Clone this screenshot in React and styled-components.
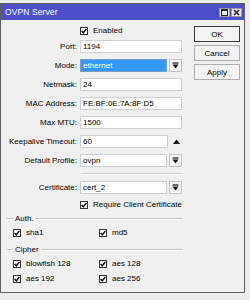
import React from "react";
import styled, { createGlobalStyle } from "styled-components";

const GlobalStyle = createGlobalStyle`
  html, body {
    margin: 0;
    padding: 0;
    background: #ececec;
    font-family: "Liberation Sans", Arial, sans-serif;
  }
`;

export default function App() {
  return (
    <>
      <GlobalStyle />
      <Window>
        <TitleBar>
          <Title>OVPN Server</Title>
          <TitleButtons>
            <TitleBtn>
              <svg width="7" height="7" viewBox="0 0 7 7">
                <rect x="0.5" y="0.5" width="6" height="6" fill="none" stroke="#222" />
                <line x1="0" y1="1.5" x2="7" y2="1.5" stroke="#222" />
              </svg>
            </TitleBtn>
            <TitleBtn>
              <svg width="7" height="7" viewBox="0 0 7 7">
                <path d="M1 1 L6 6 M6 1 L1 6" stroke="#222" strokeWidth="1.6" />
              </svg>
            </TitleBtn>
          </TitleButtons>
        </TitleBar>
        <Body>
          <Form>
            <Row $mt={4}>
              <Label />
              <Check checked label="Enabled" />
            </Row>
            <Row $mt={3}>
              <Label>Port:</Label>
              <Input $w={102}>1194</Input>
            </Row>
            <Row $mt={6}>
              <Label>Mode:</Label>
              <Input $w={87} $selected>ethernet</Input>
              <DropButton />
            </Row>
            <Row $mt={6}>
              <Label>Netmask:</Label>
              <Input $w={102}>24</Input>
            </Row>
            <Row $mt={6}>
              <Label>MAC Address:</Label>
              <Input $w={102}>FE:BF:0E:7A:8F:D5</Input>
            </Row>
            <Row $mt={6}>
              <Label>Max MTU:</Label>
              <Input $w={102}>1500</Input>
            </Row>
            <Row $mt={6}>
              <Label>Keepalive Timeout:</Label>
              <Input $w={88}>60</Input>
              <UpArrow>
                <svg width="7" height="5" viewBox="0 0 7 5">
                  <path d="M0 5 L3.5 0.5 L7 5 Z" fill="#111" />
                </svg>
              </UpArrow>
            </Row>
            <Row $mt={6}>
              <Label>Default Profile:</Label>
              <Input $w={87}>ovpn</Input>
              <DropButton />
            </Row>
            <Separator />
            <Row $mt={6}>
              <Label>Certificate:</Label>
              <Input $w={87}>cert_2</Input>
              <DropButton />
            </Row>
            <Row $mt={4}>
              <Label />
              <Check checked label="Require Client Certificate" />
            </Row>
            <GroupHeader $mt={2}>Auth.</GroupHeader>
            <CheckGrid $mt={2}>
              <Check checked label="sha1" />
              <Check checked label="md5" />
            </CheckGrid>
            <GroupHeader $mt={5}>Cipher</GroupHeader>
            <CheckGrid $mt={2}>
              <Check checked label="blowfish 128" />
              <Check checked label="aes 128" />
            </CheckGrid>
            <CheckGrid $mt={2}>
              <Check checked label="aes 192" />
              <Check checked label="aes 256" />
            </CheckGrid>
          </Form>
          <Buttons>
            <Button $default>OK</Button>
            <Button>Cancel</Button>
            <Button>Apply</Button>
          </Buttons>
        </Body>
      </Window>
    </>
  );
}

function Check({ checked, label }) {
  return (
    <CheckWrap>
      <Box>
        {checked && (
          <svg width="6" height="6" viewBox="0 0 6 6">
            <path d="M0.6 3 L2.3 4.8 L5.4 0.9" fill="none" stroke="#111" strokeWidth="1.5" />
          </svg>
        )}
      </Box>
      <CheckLabel>{label}</CheckLabel>
    </CheckWrap>
  );
}

function DropButton() {
  return (
    <SquareButton>
      <svg width="7" height="7" viewBox="0 0 7 7">
        <line x1="0.5" y1="1" x2="6.5" y2="1" stroke="#111" strokeWidth="1.2" />
        <path d="M0.5 2.5 L6.5 2.5 L3.5 6.5 Z" fill="#111" />
      </svg>
    </SquareButton>
  );
}

const Window = styled.div`
  margin-top: 3px;
  width: 243px;
  height: 288px;
  border: 1px solid #5f5f5f;
  background: #f0f0f0;
  display: flex;
  flex-direction: column;
  font-size: 8px;
  color: #000;
`;

const TitleBar = styled.div`
  height: 16px;
  background: #4c50c8;
  display: flex;
  align-items: center;
  justify-content: space-between;
  padding: 0 2px 0 4px;
`;

const Title = styled.div`
  color: #fff;
  font-size: 8.5px;
  letter-spacing: 0.1px;
`;

const TitleButtons = styled.div`
  display: flex;
  gap: 1px;
  margin-top: 1px;
`;

const TitleBtn = styled.div`
  width: 11px;
  height: 9px;
  background: #e8e8e8;
  border: 1px solid #9a9a9a;
  box-sizing: border-box;
  display: flex;
  align-items: center;
  justify-content: center;
`;

const Body = styled.div`
  flex: 1;
  display: flex;
`;

const Form = styled.div`
  width: 192px;
  display: flex;
  flex-direction: column;
`;

const Row = styled.div`
  display: flex;
  align-items: center;
  height: 13px;
  margin-top: ${(p) => p.$mt}px;
`;

const Label = styled.div`
  width: 76px;
  margin-right: 3px;
  text-align: right;
  white-space: nowrap;
`;

const Input = styled.div`
  box-sizing: border-box;
  width: ${(p) => p.$w}px;
  height: 13px;
  line-height: 11px;
  padding-left: 2px;
  background: ${(p) => (p.$selected ? "#3399ff" : "#fff")};
  color: ${(p) => (p.$selected ? "#fff" : "#000")};
  border: 1px solid ${(p) => (p.$selected ? "#7a9ccc" : "#cfcfcf")};
  white-space: nowrap;
  overflow: hidden;
`;

const SquareButton = styled.div`
  box-sizing: border-box;
  width: 13px;
  height: 13px;
  margin-left: 2px;
  background: #f4f4f4;
  border: 1px solid #c4c4c4;
  display: flex;
  align-items: center;
  justify-content: center;
`;

const UpArrow = styled.div`
  width: 14px;
  display: flex;
  justify-content: center;
  margin-left: 1px;
`;

const Separator = styled.div`
  margin: 6px 0 0 80px;
  width: 102px;
  height: 1px;
  background: #cfcfcf;
  border-bottom: 1px solid #fff;
`;

const CheckWrap = styled.div`
  display: flex;
  align-items: center;
  gap: 5px;
`;

const Box = styled.div`
  box-sizing: border-box;
  width: 8px;
  height: 8px;
  background: #fff;
  border: 1px solid #333;
  display: flex;
  align-items: center;
  justify-content: center;
`;

const CheckLabel = styled.span`
  white-space: nowrap;
`;

const GroupHeader = styled.div`
  display: flex;
  align-items: center;
  gap: 2px;
  height: 11px;
  margin: ${(p) => p.$mt}px 10px 0 6px;
  &::before,
  &::after {
    content: "";
    height: 1px;
    background: #c4c4c4;
    border-bottom: 1px solid #fff;
  }
  &::before {
    width: 6px;
  }
  &::after {
    flex: 1;
  }
`;

const CheckGrid = styled.div`
  display: grid;
  grid-template-columns: 86px 1fr;
  height: 13px;
  align-items: center;
  padding-left: 12px;
  margin-top: ${(p) => p.$mt}px;
`;

const Buttons = styled.div`
  display: flex;
  flex-direction: column;
  gap: 3px;
  padding: 6px 0 0 1px;
`;

const Button = styled.div`
  box-sizing: border-box;
  width: 46px;
  height: 16px;
  background: #f3f3f3;
  border: 1px solid ${(p) => (p.$default ? "#3c3c3c" : "#adadad")};
  display: flex;
  align-items: center;
  justify-content: center;
  font-size: 8px;
`;
